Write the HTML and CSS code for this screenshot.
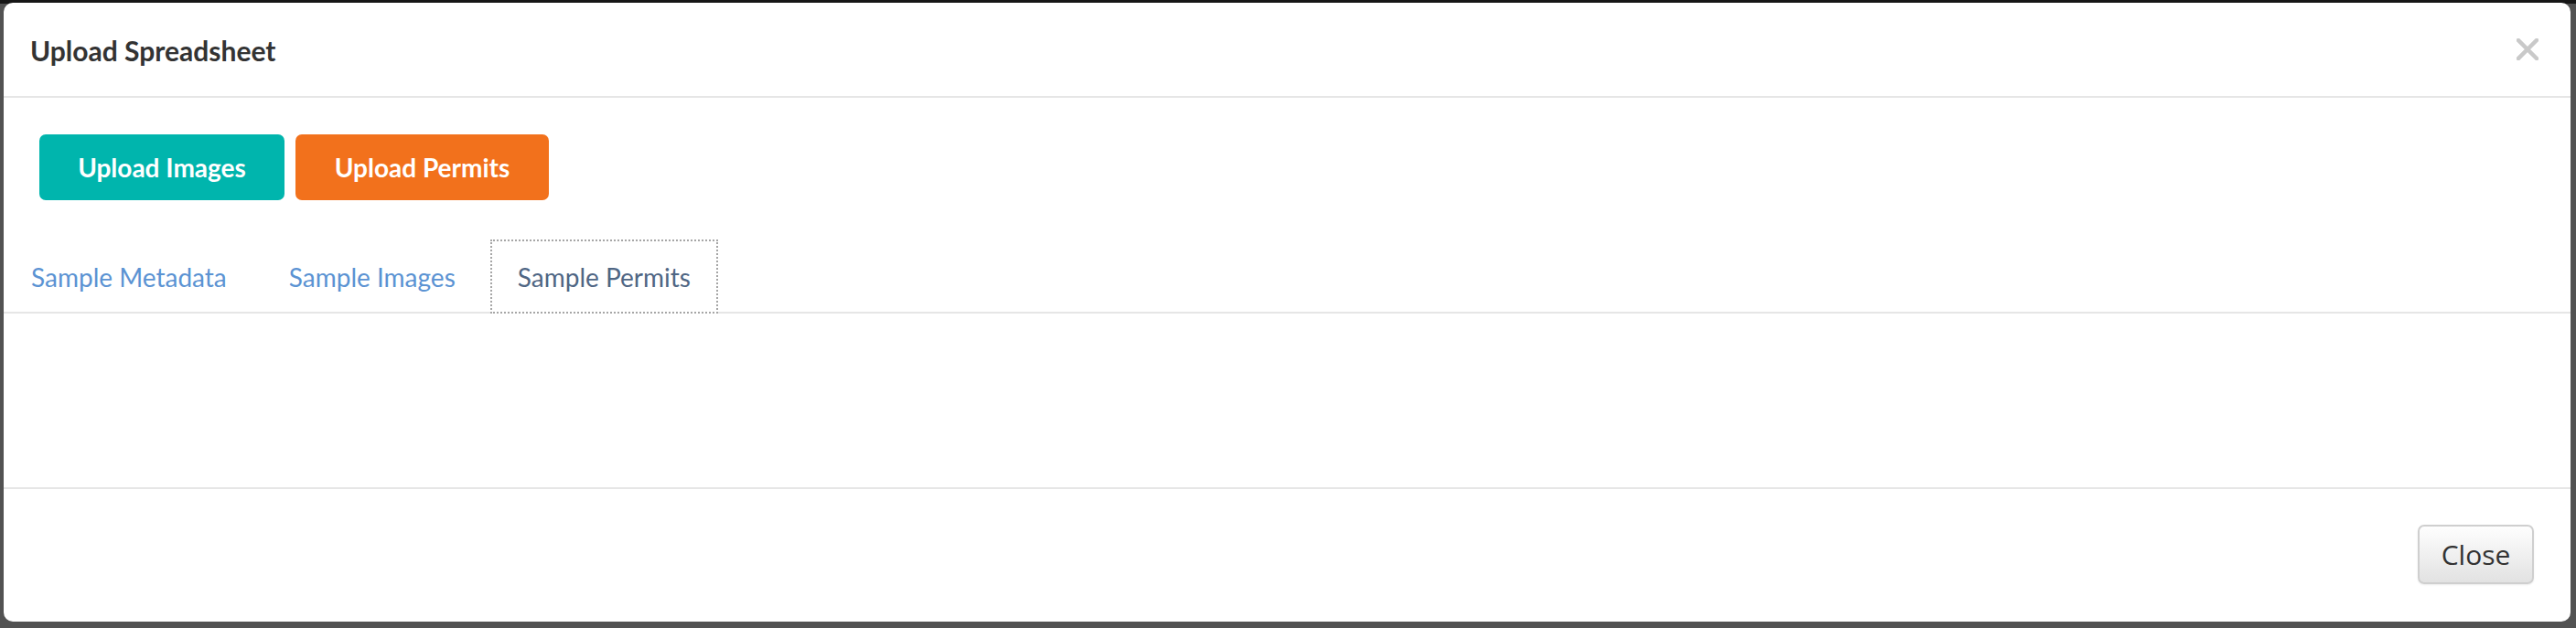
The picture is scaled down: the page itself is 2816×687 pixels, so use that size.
FILE: index.html
```html
<!DOCTYPE html>
<html lang="en">
<head>
<meta charset="utf-8">
<title>Upload Spreadsheet</title>
<link rel="stylesheet" href="styles.css">
</head>
<body>
<div class="modal">
  <div class="modal-header">
    <h4 class="modal-title">Upload Spreadsheet</h4>
    <button class="close" type="button" aria-label="Close">
      <svg width="24" height="24" viewBox="0 0 24 24"><path d="M2 2 L22 22 M22 2 L2 22" stroke="#c9c9c9" stroke-width="4.5" stroke-linecap="square" fill="none"/></svg>
    </button>
  </div>
  <div class="modal-body">
    <div class="actions">
      <button class="ui-btn teal" type="button">Upload Images</button>
      <button class="ui-btn orange" type="button">Upload Permits</button>
    </div>
    <ul class="nav-tabs">
      <li class="tab"><a>Sample Metadata</a></li>
      <li class="tab"><a>Sample Images</a></li>
      <li class="tab active"><a>Sample Permits</a></li>
    </ul>
    <div class="tab-content"></div>
  </div>
  <div class="modal-footer">
    <button class="btn-default" type="button">Close</button>
  </div>
</div>
</body>
</html>
```

FILE: styles.css
```css
html, body {
  margin: 0;
  padding: 0;
}
body {
  width: 2816px;
  height: 687px;
  background: linear-gradient(#161616 0, #161616 4px, #525252 4px);
  font-family: Lato, "Noto Sans", sans-serif;
  overflow: hidden;
}
.modal {
  margin: 3px 6px 0 4px;
  height: 677px;
  background: #fff;
  border-radius: 10px;
  display: flex;
  flex-direction: column;
  overflow: hidden;
}
.modal-header {
  height: 102px;
  padding: 0 35px 0 29px;
  display: flex;
  align-items: center;
  justify-content: space-between;
  border-bottom: 2px solid #e6e6e6;
  flex: none;
}
.modal-title {
  margin: 0;
  font-family: Lato, sans-serif;
  font-weight: 700;
  font-size: 30px;
  color: #333;
  line-height: 1;
  padding-top: 2px;
}
.close {
  border: 0;
  background: none;
  padding: 0;
  width: 24px;
  height: 24px;
  display: flex;
}
.modal-body {
  flex: 1;
  display: flex;
  flex-direction: column;
}
.actions {
  padding: 40px 0 0 39px;
  display: flex;
  gap: 12px;
}
.ui-btn {
  height: 72px;
  border: 0;
  border-radius: 7px;
  color: #fff;
  font-family: Lato, sans-serif;
  font-weight: 700;
  font-size: 28px;
  padding: 0;
}
.ui-btn.teal { background: #00b5ad; width: 268px; }
.ui-btn.orange { background: #f2711c; width: 277px; }
.nav-tabs {
  list-style: none;
  margin: 43px 0 0 0;
  padding: 0;
  display: flex;
  border-bottom: 2px solid #e6e6e6;
}
.tab {
  margin-bottom: -2px;
  margin-right: 8px;
}
.tab a {
  display: flex;
  align-items: center;
  height: 77px;
  padding: 0 28px;
  border: 2px solid transparent;
  font-size: 28px;
  color: #5b93d3;
  background: transparent;
}
.tab.active a {
  border: 2px dotted #a6a6a6;
  color: #4f6684;
  background: #fff;
}
.tab-content {
  flex: 1;
}
.modal-footer {
  flex: none;
  height: 147px;
  border-top: 2px solid #e6e6e6;
  display: flex;
  justify-content: flex-end;
  padding: 39px 40px 0 0;
  box-sizing: border-box;
}
.btn-default {
  width: 127px;
  height: 65px;
  border: 2px solid #cfcfcf;
  border-radius: 7px;
  background: linear-gradient(#fefefe, #e2e2e2);
  box-shadow: 0 1px 2px rgba(0,0,0,0.08);
  font-family: "Open Sans", "Noto Sans", sans-serif;
  font-size: 30px;
  color: #333;
  padding: 0;
}
```
